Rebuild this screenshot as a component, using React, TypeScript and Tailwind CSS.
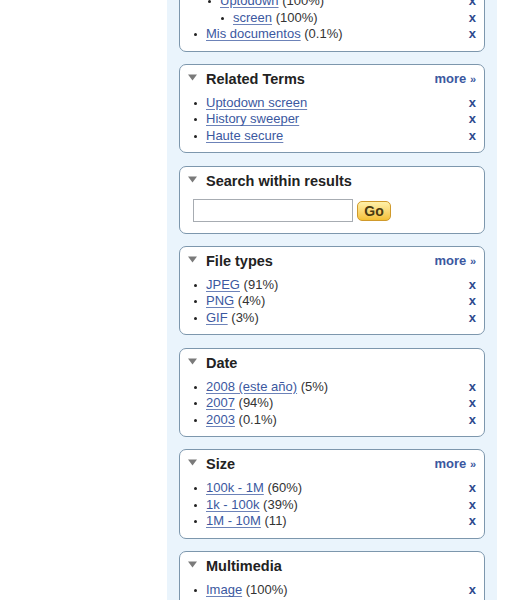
import React from 'react'

type Item = { label: string; count?: string; level?: number }

type Section = {
  title: string
  more?: boolean
  items?: Item[]
  search?: boolean
}

const sections: Section[] = [
  {
    title: 'Folders',
    items: [
      { label: 'Mis imágenes', count: '(99%)' },
      { label: 'Uptodown', count: '(100%)', level: 1 },
      { label: 'screen', count: '(100%)', level: 2 },
      { label: 'Mis documentos', count: '(0.1%)' },
    ],
  },
  {
    title: 'Related Terms',
    more: true,
    items: [{ label: 'Uptodown screen' }, { label: 'History sweeper' }, { label: 'Haute secure' }],
  },
  { title: 'Search within results', search: true },
  {
    title: 'File types',
    more: true,
    items: [
      { label: 'JPEG', count: '(91%)' },
      { label: 'PNG', count: '(4%)' },
      { label: 'GIF', count: '(3%)' },
    ],
  },
  {
    title: 'Date',
    items: [
      { label: '2008 (este año)', count: '(5%)' },
      { label: '2007', count: '(94%)' },
      { label: '2003', count: '(0.1%)' },
    ],
  },
  {
    title: 'Size',
    more: true,
    items: [
      { label: '100k - 1M', count: '(60%)' },
      { label: '1k - 100k', count: '(39%)' },
      { label: '1M - 10M', count: '(11)' },
    ],
  },
  {
    title: 'Multimedia',
    items: [{ label: 'Image', count: '(100%)' }],
  },
]

const indent = ['pl-[18px]', 'pl-[32px]', 'pl-[45px]']

function Triangle() {
  return (
    <svg width="9" height="7" viewBox="0 0 9 7" className="shrink-0 -mt-[3px]">
      <path d="M0 0.5h9L4.5 6.5z" fill="#7a7a7a" />
    </svg>
  )
}

function FacetRow({ item }: { item: Item }) {
  return (
    <li className={`relative flex items-center justify-between pr-2 leading-[16.5px] ${indent[item.level ?? 0]}`}>
      <span className="whitespace-nowrap">
        {/* bullet */}
        <span className="absolute -ml-[12px] mt-[7px] h-[3px] w-[3px] rounded-full bg-[#222]" />
        <a href="#" className="text-[#3b58a0] underline underline-offset-2 decoration-[#6c82b8]">
          {item.label}
        </a>
        {item.count && <span className="text-[#333]"> {item.count}</span>}
      </span>
      <a href="#" className="font-bold text-[#2e4a8e] no-underline">
        x
      </a>
    </li>
  )
}

function Facet({ section }: { section: Section }) {
  return (
    <div className="rounded-[7px] border border-[#7d97ad] bg-white pt-[5px] pb-2 pl-2">
      <div className="flex items-center gap-[9px] pr-2 leading-[18px]">
        <Triangle />
        <span className="flex-1 text-[14.5px] font-bold text-[#222]">{section.title}</span>
        {section.more && (
          <a href="#" className="text-[13px] font-bold text-[#3b58a0]">
            more <span className="text-[11px]">»</span>
          </a>
        )}
      </div>
      {section.items && (
        <ul className="mt-[7px] text-[13px]">
          {section.items.map((item) => (
            <FacetRow key={item.label} item={item} />
          ))}
        </ul>
      )}
      {section.search && (
        <div className="mt-[9px] mb-[3px] flex items-center gap-1 pl-[5px]">
          <input
            type="text"
            className="h-[23px] w-[160px] border border-[#a7acb2] bg-white px-1 text-[13px] outline-none"
          />
          <button className="mt-[1px] h-[20px] w-[34px] rounded-[5px] border border-[#d09a2c] bg-gradient-to-b from-[#fff1a8] to-[#f4c032] text-[14px] font-bold leading-none text-[#4a3a10]">
            Go
          </button>
        </div>
      )}
    </div>
  )
}

export default function App() {
  return (
    <div className="flex h-screen bg-white font-['Liberation_Sans',Arial,sans-serif]">
      <div className="w-[167px] shrink-0" />

      {/* Right sidebar with facets */}
      <div className="h-screen w-[330px] shrink-0 overflow-hidden bg-[#eaf4fc] px-3">
        <div className="-mt-[54.5px] flex flex-col gap-[12.3px]">
          {sections.map((s) => (
            <Facet key={s.title} section={s} />
          ))}
        </div>
      </div>

      <div className="flex-1" />
    </div>
  )
}
